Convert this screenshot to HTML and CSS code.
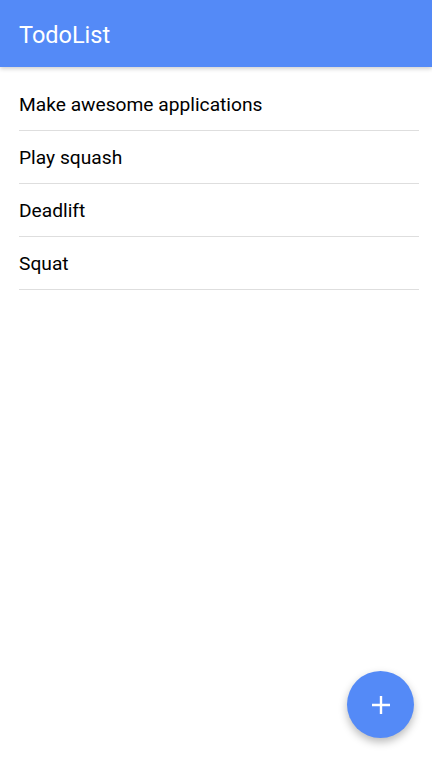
FILE: index.html
```html
<!DOCTYPE html>
<html>
<head>
<meta charset="utf-8">
<link rel="stylesheet" href="styles.css">
</head>
<body>
<div class="app">
  <header class="toolbar">
    <h1 class="title">TodoList</h1>
  </header>
  <main class="content">
    <ul class="list">
      <li class="item">Make awesome applications</li>
      <li class="item">Play squash</li>
      <li class="item">Deadlift</li>
      <li class="item">Squat</li>
    </ul>
  </main>
  <button class="fab" aria-label="Add">
    <svg width="20" height="20" viewBox="0 0 20 20"><path d="M10 1v18M1 10h18" stroke="#fff" stroke-width="2.4" fill="none"/></svg>
  </button>
</div>
</body>
</html>
```

FILE: styles.css
```css
html, body {
  margin: 0;
  padding: 0;
  height: 100%;
  background: #fff;
  font-family: Roboto, "Noto Sans", sans-serif;
}
.app {
  height: 100%;
  display: flex;
  flex-direction: column;
}
.toolbar {
  height: 67px;
  background: #548af7;
  display: flex;
  align-items: center;
  padding: 0 19px;
  box-shadow: 0 2px 4px rgba(0,0,0,0.18);
  position: relative;
  z-index: 1;
}
.title {
  margin: 0;
  font-weight: 400;
  font-size: 23.5px;
  color: #fff;
  padding-top: 2px;
}
.content {
  flex: 1;
}
.list {
  list-style: none;
  margin: 0;
  padding: 11px 13px 0 19px;
}
.item {
  height: 52px;
  display: flex;
  align-items: center;
  border-bottom: 1px solid #dedede;
  font-size: 19.2px;
  color: #000;
}
.fab {
  position: fixed;
  right: 18px;
  bottom: 30px;
  width: 67px;
  height: 67px;
  border-radius: 50%;
  border: none;
  background: #548af7;
  display: flex;
  align-items: center;
  justify-content: center;
  box-shadow: 0 4px 8px rgba(0,0,0,0.28);
  padding: 0;
}
```
